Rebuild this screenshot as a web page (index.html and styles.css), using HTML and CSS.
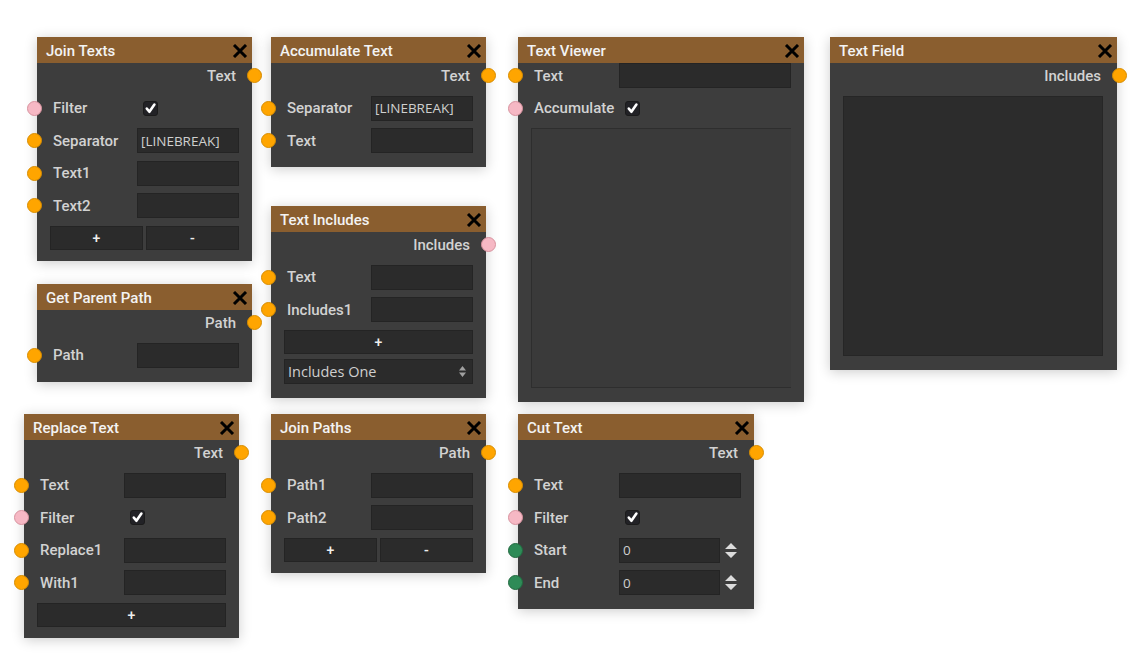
FILE: index.html
```html
<!DOCTYPE html>
<html>
<head>
<meta charset="utf-8">
<title>Text nodes</title>
<link rel="stylesheet" href="styles.css">
</head>
<body>
<div class="canvas">

  <!-- Join Texts -->
  <div class="node n-join">
    <div class="hdr"><span class="title">Join Texts</span><svg class="close" viewBox="0 0 16 14"><path d="M2 1L14 13M14 1L2 13"/></svg></div>
    <div class="body">
      <div class="row out"><span class="lbl">Text</span><i class="port p-or"></i></div>
      <div class="row"><i class="port p-pk"></i><span class="lbl">Filter</span><span class="chk"><svg viewBox="0 0 15 15"><path d="M3.8 7.6l2.6 3.2L11.4 3.6"/></svg></span></div>
      <div class="row"><i class="port p-or"></i><span class="lbl">Separator</span><span class="inp">[LINEBREAK]</span></div>
      <div class="row"><i class="port p-or"></i><span class="lbl">Text1</span><span class="inp"></span></div>
      <div class="row"><i class="port p-or"></i><span class="lbl">Text2</span><span class="inp"></span></div>
      <div class="row btns"><span class="btn">+</span><span class="btn">-</span></div>
    </div>
  </div>

  <!-- Accumulate Text -->
  <div class="node n-acc">
    <div class="hdr"><span class="title">Accumulate Text</span><svg class="close" viewBox="0 0 16 14"><path d="M2 1L14 13M14 1L2 13"/></svg></div>
    <div class="body">
      <div class="row out"><span class="lbl">Text</span><i class="port p-or"></i></div>
      <div class="row"><i class="port p-or"></i><span class="lbl">Separator</span><span class="inp">[LINEBREAK]</span></div>
      <div class="row"><i class="port p-or"></i><span class="lbl">Text</span><span class="inp"></span></div>
    </div>
  </div>

  <!-- Text Viewer -->
  <div class="node n-tv">
    <div class="hdr"><span class="title">Text Viewer</span><svg class="close" viewBox="0 0 16 14"><path d="M2 1L14 13M14 1L2 13"/></svg></div>
    <div class="body">
      <div class="row"><i class="port p-or"></i><span class="lbl">Text</span><span class="inp"></span></div>
      <div class="row"><i class="port p-pk"></i><span class="lbl">Accumulate</span><span class="chk"><svg viewBox="0 0 15 15"><path d="M3.8 7.6l2.6 3.2L11.4 3.6"/></svg></span></div>
      <div class="viewer"></div>
    </div>
  </div>

  <!-- Text Field -->
  <div class="node n-tf">
    <div class="hdr"><span class="title">Text Field</span><svg class="close" viewBox="0 0 16 14"><path d="M2 1L14 13M14 1L2 13"/></svg></div>
    <div class="body">
      <div class="row out"><span class="lbl">Includes</span><i class="port p-or"></i></div>
      <div class="field"></div>
    </div>
  </div>

  <!-- Text Includes -->
  <div class="node n-inc">
    <div class="hdr"><span class="title">Text Includes</span><svg class="close" viewBox="0 0 16 14"><path d="M2 1L14 13M14 1L2 13"/></svg></div>
    <div class="body">
      <div class="row out"><span class="lbl">Includes</span><i class="port p-pk"></i></div>
      <div class="row"><i class="port p-or"></i><span class="lbl">Text</span><span class="inp"></span></div>
      <div class="row"><i class="port p-or"></i><span class="lbl">Includes1</span><span class="inp"></span></div>
      <div class="row btns"><span class="btn">+</span></div>
      <div class="row selrow"><span class="sel"><span>Includes One</span><svg class="selarr" viewBox="0 0 7 11"><path d="M0 4.5L3.5 0L7 4.5ZM0 6.5L7 6.5L3.5 11Z"/></svg></span></div>
    </div>
  </div>

  <!-- Get Parent Path -->
  <div class="node n-gpp">
    <div class="hdr"><span class="title">Get Parent Path</span><svg class="close" viewBox="0 0 16 14"><path d="M2 1L14 13M14 1L2 13"/></svg></div>
    <div class="body">
      <div class="row out"><span class="lbl">Path</span><i class="port p-or"></i></div>
      <div class="row"><i class="port p-or"></i><span class="lbl">Path</span><span class="inp"></span></div>
    </div>
  </div>

  <!-- Replace Text -->
  <div class="node n-rep">
    <div class="hdr"><span class="title">Replace Text</span><svg class="close" viewBox="0 0 16 14"><path d="M2 1L14 13M14 1L2 13"/></svg></div>
    <div class="body">
      <div class="row out"><span class="lbl">Text</span><i class="port p-or"></i></div>
      <div class="row"><i class="port p-or"></i><span class="lbl">Text</span><span class="inp"></span></div>
      <div class="row"><i class="port p-pk"></i><span class="lbl">Filter</span><span class="chk"><svg viewBox="0 0 15 15"><path d="M3.8 7.6l2.6 3.2L11.4 3.6"/></svg></span></div>
      <div class="row"><i class="port p-or"></i><span class="lbl">Replace1</span><span class="inp"></span></div>
      <div class="row"><i class="port p-or"></i><span class="lbl">With1</span><span class="inp"></span></div>
      <div class="row btns"><span class="btn">+</span></div>
    </div>
  </div>

  <!-- Join Paths -->
  <div class="node n-jp">
    <div class="hdr"><span class="title">Join Paths</span><svg class="close" viewBox="0 0 16 14"><path d="M2 1L14 13M14 1L2 13"/></svg></div>
    <div class="body">
      <div class="row out"><span class="lbl">Path</span><i class="port p-or"></i></div>
      <div class="row"><i class="port p-or"></i><span class="lbl">Path1</span><span class="inp"></span></div>
      <div class="row"><i class="port p-or"></i><span class="lbl">Path2</span><span class="inp"></span></div>
      <div class="row btns"><span class="btn">+</span><span class="btn">-</span></div>
    </div>
  </div>

  <!-- Cut Text -->
  <div class="node n-cut">
    <div class="hdr"><span class="title">Cut Text</span><svg class="close" viewBox="0 0 16 14"><path d="M2 1L14 13M14 1L2 13"/></svg></div>
    <div class="body">
      <div class="row out"><span class="lbl">Text</span><i class="port p-or"></i></div>
      <div class="row"><i class="port p-or"></i><span class="lbl">Text</span><span class="inp"></span></div>
      <div class="row"><i class="port p-pk"></i><span class="lbl">Filter</span><span class="chk"><svg viewBox="0 0 15 15"><path d="M3.8 7.6l2.6 3.2L11.4 3.6"/></svg></span></div>
      <div class="row"><i class="port p-gr"></i><span class="lbl">Start</span><span class="inp num">0</span><span class="spin"><svg viewBox="0 0 12 15"><path d="M0 6L6 0L12 6ZM0 9L12 9L6 15Z"/></svg></span></div>
      <div class="row"><i class="port p-gr"></i><span class="lbl">End</span><span class="inp num">0</span><span class="spin"><svg viewBox="0 0 12 15"><path d="M0 6L6 0L12 6ZM0 9L12 9L6 15Z"/></svg></span></div>
    </div>
  </div>

</div>
</body>
</html>
```

FILE: styles.css
```css
html, body {
  margin: 0;
  padding: 0;
  background: #ffffff;
}

body {
  font-family: Roboto, "Liberation Sans", sans-serif;
}

.canvas {
  position: relative;
  width: 1148px;
  height: 657px;
  overflow: hidden;
}

/* ---------- node frame ---------- */
.node {
  position: absolute;
  width: 215px;
  background: #3d3d3d;
  box-shadow: 0 2px 12px rgba(0, 0, 0, 0.2);
}

.n-join { left: 37px;  top: 37px; }
.n-acc  { left: 271px; top: 37px; }
.n-tv   { left: 518px; top: 37px; width: 286px; }
.n-tf   { left: 830px; top: 37px; width: 287px; }
.n-inc  { left: 271px; top: 206px; }
.n-gpp  { left: 37px;  top: 284px; }
.n-rep  { left: 24px;  top: 414px; }
.n-jp   { left: 271px; top: 414px; }
.n-cut  { left: 518px; top: 414px; width: 236px; }

.hdr {
  height: 26px;
  box-sizing: border-box;
  background: #8a5e2f;
  display: flex;
  align-items: center;
  justify-content: space-between;
  padding: 2px 4px 0 9px;
}

.title {
  color: #f3f3f3;
  font-size: 15px;
  font-weight: 500;
  white-space: nowrap;
}

.close {
  width: 16px;
  height: 14px;
  fill: none;
  stroke: #000;
  stroke-width: 3;
}

/* ---------- body rows ---------- */
.body {
  display: flex;
  flex-direction: column;
  gap: 7.5px;
  padding-bottom: 14px;
}

.row {
  position: relative;
  display: flex;
  align-items: center;
  height: 25px;
  padding: 0 13px 0 16px;
}

.out {
  justify-content: flex-end;
  padding-right: 16px;
}

.lbl {
  flex: 0 0 84px;
  color: #d2d2d2;
  font-size: 15px;
  font-weight: 500;
  white-space: nowrap;
}

.n-tv .lbl,
.n-cut .lbl {
  flex-basis: 85px;
}

.node .out .lbl {
  flex: none;
}

.inp {
  flex: 1;
  min-width: 0;
  height: 25px;
  box-sizing: border-box;
  background: #2b2b2b;
  border: 1px solid #242424;
  display: flex;
  align-items: center;
  padding: 0 3px;
  font-family: "Open Sans", "Noto Sans", sans-serif;
  font-size: 13.5px;
  color: #cfcfcf;
  white-space: nowrap;
  overflow: hidden;
}

.inp.num {
  flex: 0 0 101px;
}

.spin {
  flex: 1;
  display: flex;
  justify-content: center;
}

.spin svg {
  width: 12px;
  height: 15px;
  fill: #dcdcdc;
}

/* ---------- checkbox ---------- */
.chk {
  width: 15px;
  height: 15px;
  margin-left: 6px;
  box-sizing: border-box;
  background: #222226;
  border: 1px solid #1b1b1b;
  border-radius: 3px;
  display: flex;
}

.chk svg {
  width: 15px;
  height: 15px;
  margin: -1px;
  fill: none;
  stroke: #ffffff;
  stroke-width: 2.6;
  stroke-linecap: round;
  stroke-linejoin: round;
}

/* ---------- ports ---------- */
.port {
  position: absolute;
  left: -10px;
  top: 5px;
  width: 15px;
  height: 15px;
  box-sizing: border-box;
  border-radius: 50%;
}

.out .port {
  left: auto;
  right: -10px;
}

.p-or { background: #ffa500; border: 1px solid #d88d00; }
.p-pk { background: #f6b8c4; border: 1px solid #d8939f; }
.p-gr { background: #2e8b57; border: 1px solid #21693f; }

/* ---------- buttons ---------- */
.btns {
  padding: 0 13px;
  gap: 3px;
  height: 24px;
  margin-bottom: -2.5px;
}

.btn {
  flex: 1;
  height: 24px;
  box-sizing: border-box;
  background: #2b2b2b;
  border: 1px solid #242424;
  display: flex;
  align-items: center;
  justify-content: center;
  color: #eeeeee;
  font-size: 14px;
  font-weight: 500;
}

/* ---------- select ---------- */
.selrow {
  padding: 0 13px;
}

.sel {
  flex: 1;
  height: 25px;
  box-sizing: border-box;
  background: #2b2b2b;
  border: 1px solid #242424;
  display: flex;
  align-items: center;
  justify-content: space-between;
  padding: 0 6px 0 3px;
  font-family: "Open Sans", "Noto Sans", sans-serif;
  font-size: 14.5px;
  color: #cfcfcf;
}

.selarr {
  width: 7px;
  height: 11px;
  fill: #a0a0a0;
}

/* ---------- large areas ---------- */
.viewer {
  margin: 0 13px;
  height: 260px;
  box-sizing: border-box;
  background: #3a3a3a;
  border: 1px solid #2e2e2e;
  border-right: 0;
}

.field {
  margin-left: 13px;
  width: 260px;
  height: 260px;
  box-sizing: border-box;
  background: #2c2c2c;
  border: 1px solid #262626;
}
```
